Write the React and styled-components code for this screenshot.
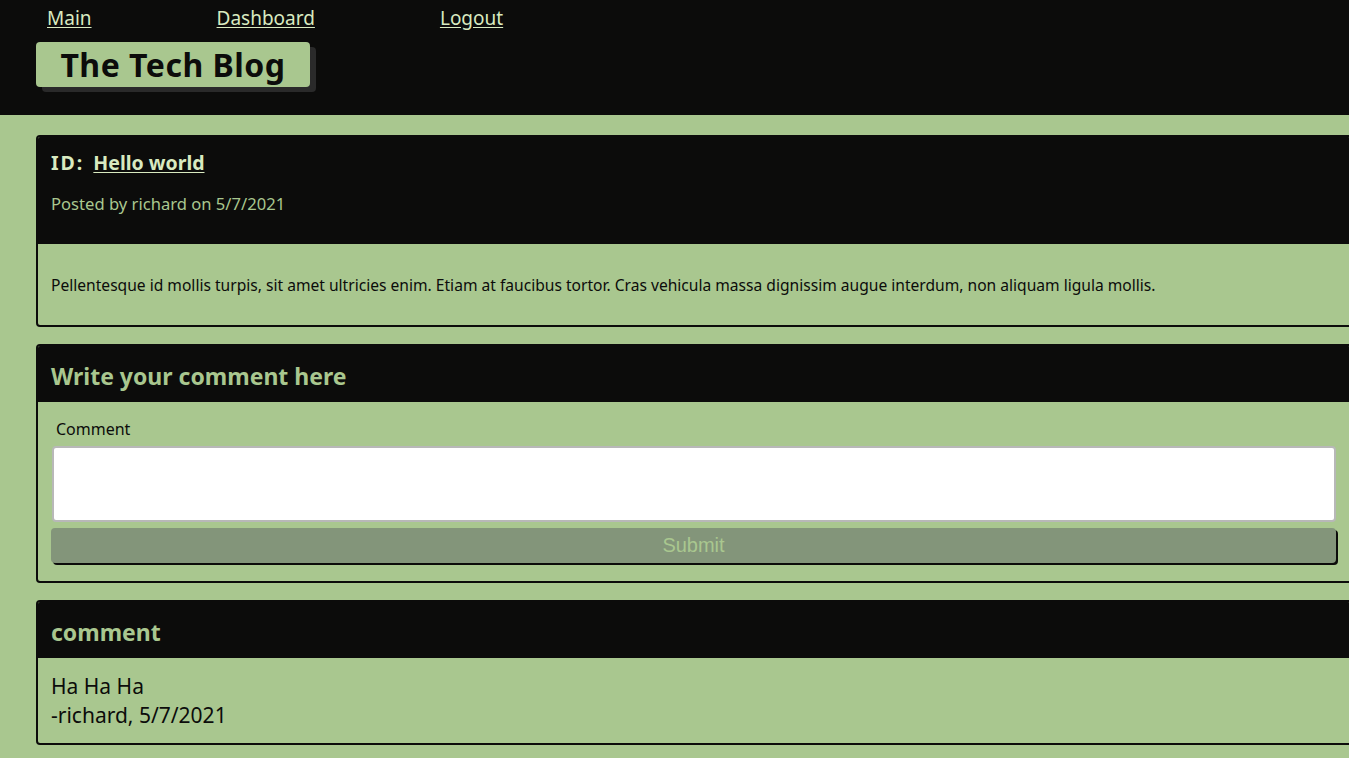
import React from 'react';
import styled, { createGlobalStyle } from 'styled-components';

const GREEN = '#a9c78f';
const PALE = '#d9eac0';
const INK = '#0c0c0b';
const FONT = '"Noto Sans", "Open Sans", sans-serif';

const Global = createGlobalStyle`
  html, body { margin: 0; padding: 0; overflow: hidden; }
  body { background: ${GREEN}; font-family: ${FONT}; color: ${INK}; }
  * { box-sizing: border-box; }
`;

const Header = styled.header`
  background: ${INK};
  height: 115px;
  padding: 6px 0 0 36px;
`;

const Nav = styled.nav`
  display: flex;
  gap: 125px;
  margin-left: 11px;
  height: 24px;
  align-items: center;
`;

const NavLink = styled.a`
  color: ${PALE};
  font-size: 19px;
  line-height: 24px;
  text-decoration: underline;
  text-underline-offset: 2px;
  cursor: pointer;
`;

const Brand = styled.h1`
  margin: 12px 0 0;
  width: 274px;
  height: 45px;
  display: flex;
  align-items: center;
  justify-content: center;
  background: ${GREEN};
  color: ${INK};
  border-radius: 4px;
  box-shadow: 6px 5px 0 #2a2a2a;
  font-size: 32px;
  font-weight: 700;
  line-height: 1;
  letter-spacing: 0.5px;
  padding-top: 1px;
`;

const Main = styled.main`
  padding: 20px 0 0 36px;
  display: flex;
  flex-direction: column;
  gap: 17px;
`;

const Card = styled.section`
  width: 1316px;
  border: 2px solid ${INK};
  border-radius: 4px;
  overflow: hidden;
`;

const CardHead = styled.div`
  background: ${INK};
  padding: ${p => (p.$tall ? '14px 13px 30px' : '15px 13px 11px')};
`;

const PostTitle = styled.h2`
  margin: 0;
  font-size: 19.5px;
  line-height: 24px;
  font-weight: 700;
  color: ${PALE};
  letter-spacing: 2px;
`;

const TitleLink = styled.a`
  color: ${PALE};
  margin-left: 9px;
  letter-spacing: 0;
  text-decoration: underline;
  text-underline-offset: 2px;
`;

const Meta = styled.p`
  margin: 19px 0 0;
  font-size: 16.6px;
  line-height: 20px;
  color: ${GREEN};
`;

const SectionTitle = styled.h3`
  margin: 0;
  font-size: 23px;
  line-height: 30px;
  font-weight: 700;
  color: ${GREEN};
`;

const PostBody = styled.p`
  margin: 0;
  padding: 31px 13px 30px;
  font-size: 15.6px;
  line-height: 20px;
`;

const Form = styled.form`
  padding: 17px 14px 18px;
  display: flex;
  flex-direction: column;
`;

const Label = styled.label`
  margin-left: 4px;
  font-size: 16px;
  line-height: 20px;
`;

const TextArea = styled.textarea`
  margin-top: 7px;
  height: 76px;
  width: 100%;
  background: #fff;
  border: 2px solid #b8b8b8;
  border-radius: 4px;
  resize: none;
  font-family: ${FONT};
`;

const SubmitButton = styled.button`
  margin: 6px 0 0 -1px;
  width: calc(100% + 1px);
  height: 35px;
  border: none;
  border-radius: 4px;
  background: #83957a;
  box-shadow: 2px 2px 0 ${INK};
  color: ${GREEN};
  font-family: "Liberation Sans", Arial, sans-serif;
  font-size: 20px;
  cursor: pointer;
`;

const CommentBody = styled.div`
  padding: 14px 13px 13px;
  font-size: 21px;
  line-height: 29px;
`;

export default function App() {
  return (
    <>
      <Global />
      <Header>
        <Nav>
          <NavLink href="#">Main</NavLink>
          <NavLink href="#">Dashboard</NavLink>
          <NavLink href="#">Logout</NavLink>
        </Nav>
        <Brand>The Tech Blog</Brand>
      </Header>
      <Main>
        <Card>
          <CardHead $tall>
            <PostTitle>ID:<TitleLink href="#">Hello world</TitleLink></PostTitle>
            <Meta>Posted by richard on 5/7/2021</Meta>
          </CardHead>
          <PostBody>
            Pellentesque id mollis turpis, sit amet ultricies enim. Etiam at faucibus tortor. Cras vehicula massa dignissim augue interdum, non aliquam ligula mollis.
          </PostBody>
        </Card>
        <Card>
          <CardHead>
            <SectionTitle>Write your comment here</SectionTitle>
          </CardHead>
          <Form onSubmit={e => e.preventDefault()}>
            <Label htmlFor="comment">Comment</Label>
            <TextArea id="comment" />
            <SubmitButton type="submit">Submit</SubmitButton>
          </Form>
        </Card>
        <Card>
          <CardHead>
            <SectionTitle>comment</SectionTitle>
          </CardHead>
          <CommentBody>
            <div>Ha Ha Ha</div>
            <div>-richard, 5/7/2021</div>
          </CommentBody>
        </Card>
      </Main>
    </>
  );
}
